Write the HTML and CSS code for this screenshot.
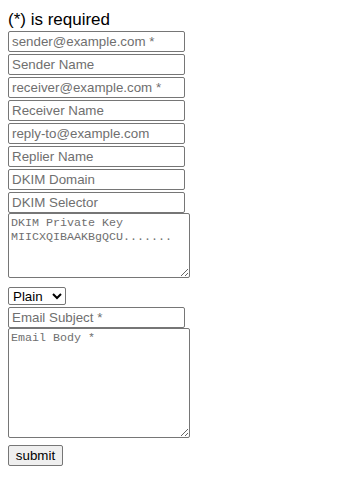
FILE: index.html
```html
<!DOCTYPE html>
<html lang="en">
<head>
    <meta charset="UTF-8">
    <meta name="viewport" content="width=device-width, initial-scale=1.0">
    <title>Send Mail</title>
    <link rel="stylesheet" href="styles.css">
</head>
<body>
    <p class="note">(*) is required</p>
    <form class="mail-form" onsubmit="return false">
        <input class="field" type="email" placeholder="sender@example.com *">
        <input class="field" type="text" placeholder="Sender Name">
        <input class="field" type="email" placeholder="receiver@example.com *">
        <input class="field" type="text" placeholder="Receiver Name">
        <input class="field" type="email" placeholder="reply-to@example.com">
        <input class="field" type="text" placeholder="Replier Name">
        <input class="field" type="text" placeholder="DKIM Domain">
        <input class="field" type="text" placeholder="DKIM Selector">
        <textarea class="box key-box" placeholder="DKIM Private Key&#10;MIICXQIBAAKBgQCU......."></textarea>
        <select class="format">
            <option value="plain">Plain</option>
            <option value="html">HTML</option>
        </select>
        <input class="field" type="text" placeholder="Email Subject *">
        <textarea class="box body-box" placeholder="Email Body *"></textarea>
        <button class="send" type="submit">submit</button>
    </form>
</body>
</html>
```

FILE: styles.css
```css
body {
    margin: 8px;
    background-color: #fff;
    color: #000;
    font-family: "Liberation Sans", Arial, sans-serif;
}
.note {
    margin: 0;
    font-size: 17px;
    line-height: 21px;
    padding-top: 1px;
    height: 20px;
}
.mail-form {
    margin: 0;
}
.field {
    display: block;
    box-sizing: border-box;
    width: 177px;
    height: 21px;
    margin: 2px 0 0;
    padding: 1px 3px;
    border: 1px solid #767676;
    border-radius: 2px;
    background-color: #fff;
    font-family: "Liberation Sans", Arial, sans-serif;
    font-size: 13.33px;
    color: #000;
}
.field::placeholder,
.box::placeholder {
    color: #6f6f6f;
}
.box {
    display: block;
    box-sizing: border-box;
    width: 182px;
    margin: 0;
    padding: 2px;
    border: 1px solid #767676;
    border-radius: 2px;
    background-color: #fff;
    font-family: "Liberation Mono", "Courier New", monospace;
    font-size: 11.67px;
    line-height: 14px;
}
.key-box {
    height: 65px;
}
.body-box {
    height: 110px;
}
.format {
    display: block;
    box-sizing: border-box;
    width: 58px;
    height: 18px;
    margin: 9px 0 0;
    border: 1px solid #767676;
    border-radius: 2px;
    background-color: #fff;
    font-family: "Liberation Sans", Arial, sans-serif;
    font-size: 13.33px;
    color: #000;
}
.send {
    display: block;
    box-sizing: border-box;
    width: 55px;
    height: 21px;
    margin: 7px 0 0;
    padding: 1px 6px;
    border: 1px solid #767676;
    border-radius: 2px;
    background-color: #efefef;
    font-family: "Liberation Sans", Arial, sans-serif;
    font-size: 13.33px;
    color: #000;
}
```
